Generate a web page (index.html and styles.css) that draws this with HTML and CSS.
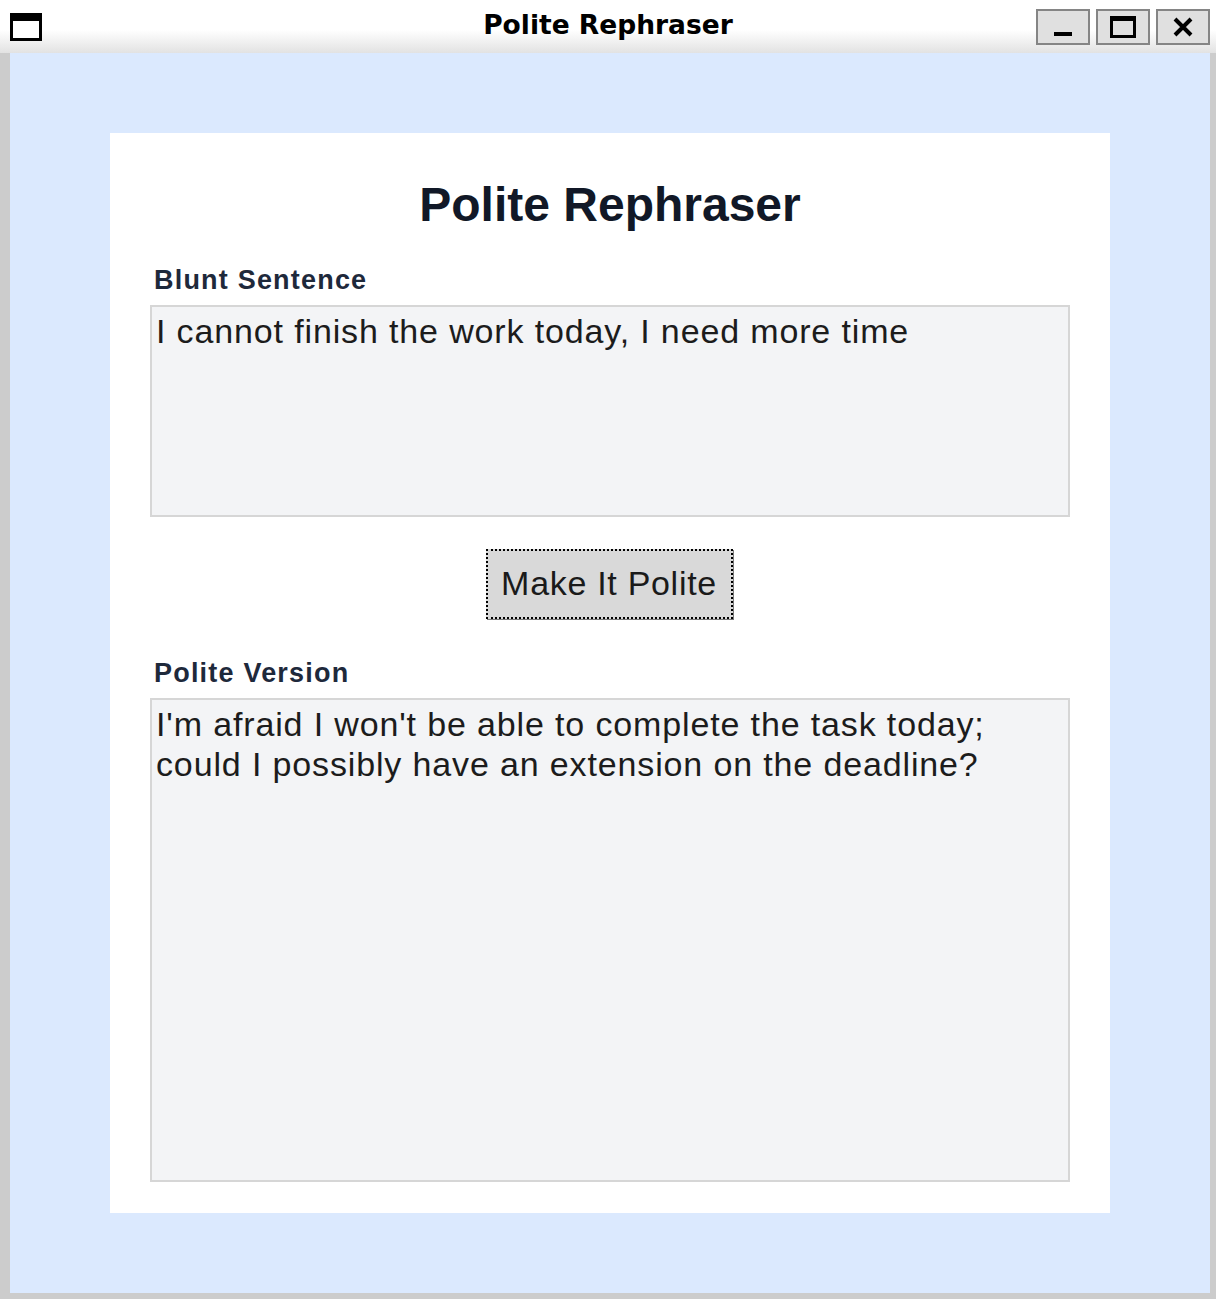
FILE: index.html
```html
<!DOCTYPE html>
<html lang="en">
<head>
<meta charset="utf-8">
<title>Polite Rephraser</title>
<link rel="stylesheet" href="styles.css">
</head>
<body>
<div class="window">
  <header class="titlebar">
    <svg class="win-icon" width="32" height="28" viewBox="0 0 32 28" aria-hidden="true">
      <rect x="1.5" y="1.5" width="29" height="25" fill="#fff" stroke="#000" stroke-width="3"/>
      <rect x="0" y="0" width="32" height="8" fill="#000"/>
    </svg>
    <div class="title">Polite Rephraser</div>
    <div class="controls">
      <div class="ctl">
        <svg width="22" height="22" viewBox="0 0 22 22" aria-hidden="true"><rect x="2" y="16" width="18" height="4" fill="#000"/></svg>
      </div>
      <div class="ctl">
        <svg width="26" height="22" viewBox="0 0 26 22" aria-hidden="true"><rect x="1.5" y="1.5" width="23" height="19" fill="none" stroke="#000" stroke-width="3"/><rect x="1" y="1" width="24" height="4" fill="#000"/></svg>
      </div>
      <div class="ctl">
        <svg width="22" height="22" viewBox="0 0 22 22" aria-hidden="true"><path d="M3 3 L19 19 M19 3 L3 19" stroke="#000" stroke-width="4"/></svg>
      </div>
    </div>
  </header>
  <main class="content">
    <section class="card">
      <h1 class="heading">Polite Rephraser</h1>
      <label class="label" for="blunt">Blunt Sentence</label>
      <textarea id="blunt" class="box box-input">I cannot finish the work today, I need more time</textarea>
      <div class="btn-row"><button class="btn" type="button">Make It Polite</button></div>
      <label class="label" for="polite">Polite Version</label>
      <textarea id="polite" class="box box-output">I'm afraid I won't be able to complete the task today; could I possibly have an extension on the deadline?</textarea>
    </section>
  </main>
</div>
</body>
</html>
```
FILE: styles.css
```css
* { box-sizing: border-box; }
html, body { margin: 0; padding: 0; }
body {
  width: 1216px;
  height: 1299px;
  background: #cccccc;
  overflow: hidden;
}
.window {
  display: flex;
  flex-direction: column;
  height: 1299px;
}
.titlebar {
  height: 53px;
  flex: none;
  display: flex;
  align-items: flex-start;
  background: linear-gradient(to bottom, #ffffff 0px, #ffffff 30px, #e2e2e2 53px);
  position: relative;
}
.win-icon {
  margin: 13px 0 0 10px;
  flex: none;
}
.title {
  position: absolute;
  left: 0;
  right: 0;
  top: 8px;
  text-align: center;
  font-family: "DejaVu Sans", sans-serif;
  font-weight: bold;
  font-size: 26.5px;
  line-height: 34px;
  color: #000;
}
.controls {
  margin-left: auto;
  margin-top: 9px;
  margin-right: 6px;
  display: flex;
  gap: 6px;
  position: relative;
}
.ctl {
  width: 54px;
  height: 36px;
  background: #e0e0e0;
  border: 2px solid #858585;
  display: flex;
  align-items: center;
  justify-content: center;
}
.content {
  flex: 1;
  margin: 0 6px 6px 10px;
  background: #dbe9fe;
  padding: 80px 100px;
}
.card {
  background: #ffffff;
  height: 1080px;
  padding: 44px 40px 30px;
  display: flex;
  flex-direction: column;
  font-family: "Liberation Sans", Arial, sans-serif;
}
.heading {
  margin: 0 0 31px;
  text-align: center;
  font-size: 48px;
  line-height: 56px;
  font-weight: bold;
  color: #111827;
}
.label {
  display: block;
  margin: 0 0 9px 4px;
  font-size: 27px;
  line-height: 32px;
  font-weight: bold;
  letter-spacing: 1.2px;
  color: #1e293b;
}
.box {
  display: block;
  width: 100%;
  margin: 0;
  resize: none;
  border: 2px solid #d6d6d6;
  background: #f3f4f6;
  padding: 4px 2px 4px 4px;
  font-family: "Liberation Sans", Arial, sans-serif;
  font-size: 34px;
  line-height: 40px;
  letter-spacing: 0.86px;
  color: #1c1c1c;
  overflow: hidden;
  outline: none;
}
.box-input { height: 212px; }
.box-output { height: 484px; }
.btn-row {
  display: flex;
  justify-content: center;
  margin: 32px 0 38px;
}
.btn {
  width: 247px;
  height: 70px;
  margin-right: 2px;
  padding: 0 0 3px;
  background: #d9d9d9;
  border: 2px dotted #000;
  box-shadow: 1px 1px 0 #7a7a7a;
  font-family: "Liberation Sans", Arial, sans-serif;
  font-size: 34px;
  line-height: 40px;
  letter-spacing: 0.7px;
  color: #1a1a1a;
}
```
